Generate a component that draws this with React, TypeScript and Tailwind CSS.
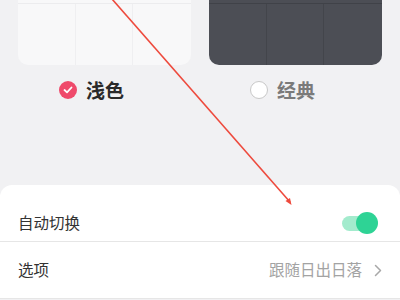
import React from "react";

export default function App() {
  const font = { fontFamily: '"Noto Sans CJK SC", "Noto Sans", sans-serif' };
  return (
    <div className="relative w-[400px] h-[300px] overflow-hidden bg-[#f1f1f3]" style={font}>
      <div className="h-[185px] px-[18px] flex flex-col">
        <div className="grid grid-cols-2 gap-[18px]">
          <div className="h-[65px] rounded-b-[10px] bg-[#f8f8f9] pt-[3px]">
            <div className="h-full border-t border-[#ececee] grid grid-cols-3">
              <div className="border-r border-[#efeff1]" />
              <div className="border-r border-[#efeff1]" />
              <div />
            </div>
          </div>
          <div className="h-[65px] rounded-b-[10px] bg-[#4c4e55] pt-[3px]">
            <div className="h-full border-t border-[#404248] grid grid-cols-3">
              <div className="border-r border-[#43454b]" />
              <div className="border-r border-[#43454b]" />
              <div />
            </div>
          </div>
        </div>
        <div className="grid grid-cols-2 gap-[18px] mt-[15px]">
          <div className="flex items-center gap-[9px] pl-[41px]">
            <span className="w-[18px] h-[18px] rounded-full bg-[#ef4a6b] flex items-center justify-center">
              <svg width="10" height="8" viewBox="0 0 10 8">
                <path d="M1.5 4 L4 6.3 L8.5 1.5" stroke="white" strokeWidth="1.8" fill="none" strokeLinecap="round" strokeLinejoin="round" />
              </svg>
            </span>
            <span className="text-[19px] font-bold text-[#2a2a2a] leading-none">浅色</span>
          </div>
          <div className="flex items-center gap-[9px] pl-[41px]">
            <span className="w-[18px] h-[18px] rounded-full border-[1.5px] border-[#c8c8c8] bg-white" />
            <span className="text-[19px] font-bold text-[#7a7a7a] leading-none">经典</span>
          </div>
        </div>
      </div>
      <div className="bg-white rounded-t-[12px]">
        <div className="h-[57px] pt-[19px] px-[18px] flex items-center justify-between border-b border-[#e6e6e6]">
          <span className="text-[15.5px] text-[#333]">自动切换</span>
          <div className="relative w-[36px] h-[22px] mr-[4px]">
            <div className="absolute left-0 top-[4px] w-[30px] h-[15px] rounded-full bg-[#a3ebcd]" />
            <div className="absolute right-0 top-0 w-[22px] h-[22px] rounded-full bg-[#2ed395]" />
          </div>
        </div>
        <div className="h-[57px] px-[18px] flex items-center justify-between border-b border-[#e6e6e6]">
          <span className="text-[15.5px] text-[#333]">选项</span>
          <div className="flex items-center gap-[12px]">
            <span className="text-[15.5px] text-[#a3a3a3]">跟随日出日落</span>
            <svg width="8" height="13" viewBox="0 0 8 13">
              <path d="M1.5 1.5 L6.5 6.5 L1.5 11.5" stroke="#a8a8a8" strokeWidth="1.5" fill="none" strokeLinecap="round" strokeLinejoin="round" />
            </svg>
          </div>
        </div>
      </div>
      <svg className="absolute inset-0 pointer-events-none" width="400" height="300" viewBox="0 0 400 300">
        <line x1="112" y1="-1" x2="290" y2="202" stroke="#ee4a3d" strokeWidth="1.6" />
        <path d="M285.5 201 L291.5 205 L290 198 Z" fill="#ee4a3d" />
      </svg>
    </div>
  );
}
